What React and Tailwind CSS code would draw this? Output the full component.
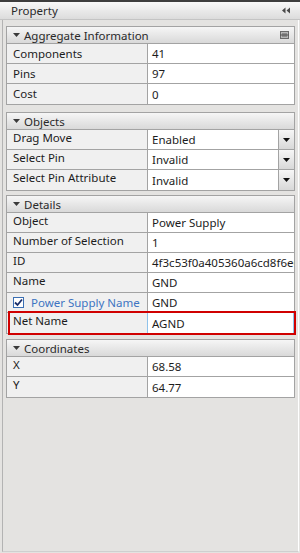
import React from 'react'

const font = { fontFamily: '"Noto Sans", "Open Sans", sans-serif' }

function Caret() {
  return (
    <svg width="7" height="4" viewBox="0 0 7 4" className="shrink-0">
      <path d="M0 0 L7 0 L3.5 4 Z" fill="#3a3a3a" />
    </svg>
  )
}

function PinIcon() {
  return (
    <svg width="9" height="8" viewBox="0 0 9 8">
      <rect x="0.5" y="0.5" width="8" height="7" fill="#b8b8b8" stroke="#6a6a6a" />
      <rect x="2" y="2" width="5" height="4" fill="#8c8c8c" />
      <line x1="0" y1="4" x2="9" y2="4" stroke="#555" />
    </svg>
  )
}

function SectionHeader({ title, pin }) {
  return (
    <div className="h-[17px] flex items-center pl-[6px] pr-[5px] border-b border-[#a3a3a3] bg-gradient-to-b from-[#f6f6f6] to-[#d9d9d9]">
      <Caret />
      <span className="ml-[4px] text-[11.5px] text-[#2a2a2a] leading-[15px]">{title}</span>
      <div className="flex-1" />
      {pin && <PinIcon />}
    </div>
  )
}

function Row({ label, value, last, drop, top, labelNode, highlight }) {
  return (
    <div className={`relative h-[20px] flex ${last ? '' : 'border-b border-[#a3a3a3]'}`}>
      <div
        className={`w-[141px] shrink-0 bg-[#f0f0f0] border-r ${
          highlight ? 'border-[#8fc2ea]' : 'border-[#a3a3a3]'
        } pl-[6px] flex ${top ? 'items-start' : 'items-center'} text-[11.5px] text-[#1c1c1c] leading-[16px]`}
      >
        {labelNode || label}
      </div>
      <div
        className={`flex-1 min-w-0 bg-white flex items-center overflow-hidden ${
          highlight ? 'border-r border-[#8fc2ea]' : ''
        }`}
      >
        <span className="pl-[4px] text-[11.5px] text-[#1c1c1c] leading-[17px] whitespace-nowrap flex-1 overflow-hidden">
          {value}
        </span>
        {drop && (
          <div className="w-[16px] h-full shrink-0 border-l border-[#a3a3a3] bg-gradient-to-b from-[#f7f7f7] to-[#d8d8d8] flex items-center justify-center">
            <svg width="7" height="4" viewBox="0 0 7 4">
              <path d="M0 0 L7 0 L3.5 4 Z" fill="#111" />
            </svg>
          </div>
        )}
      </div>
      {highlight && (
        <div className="absolute left-[1px] right-[-2px] top-[-2px] bottom-[-2px] border-2 border-[#d00000] pointer-events-none" />
      )}
    </div>
  )
}

function Section({ title, pin, children, className }) {
  return (
    <div className={`border border-[#a3a3a3] bg-white ${className}`}>
      <SectionHeader title={title} pin={pin} />
      {children}
    </div>
  )
}

export default function App() {
  return (
    <div className="w-[300px] h-[553px] bg-[#e4e3e1] flex flex-col overflow-hidden" style={font}>
      <div className="h-[2px] bg-[#3d3d3d]" />
      <div className="h-[18px] flex items-center pl-[11px] pr-[10px] bg-gradient-to-b from-[#f8f8f8] to-[#dcdcdc] border-b border-[#c4c4c4]">
        <span className="text-[11.5px] text-[#2a2a2a] leading-[15px]">Property</span>
        <div className="flex-1" />
        <svg width="8" height="7" viewBox="0 0 8 7">
          <path d="M0 3.5 L3.5 0.5 L3.5 6.5 Z M4.5 3.5 L8 0.5 L8 6.5 Z" fill="#4a4a4a" />
        </svg>
      </div>
      <div className="flex-1 ml-[2px] mr-[1px] mb-[1px] border-l border-[#b3b3b3] border-r border-r-white border-b border-b-[#cfcfcf] pl-[3px] pr-[3px] pt-[6px] flex flex-col">
        <Section title="Aggregate Information" pin>
          <Row label="Components" value="41" />
          <Row label="Pins" value="97" />
          <Row label="Cost" value="0" last />
        </Section>

        <Section title="Objects" className="mt-[7px]">
          <Row label="Drag Move" value="Enabled" drop top />
          <Row label="Select Pin" value="Invalid" drop top />
          <Row label="Select Pin Attribute" value="Invalid" drop top last />
        </Section>

        <Section title="Details" className="mt-[4px]">
          <Row label="Object" value="Power Supply" top />
          <Row label="Number of Selection" value="1" top />
          <Row label="ID" value="4f3c53f0a405360a6cd8f6e6b1" top />
          <Row label="Name" value="GND" top />
          <Row
            value="GND"
            top
            labelNode={
              <div className="flex items-center pt-[2px]">
                <div className="w-[11px] h-[11px] border border-[#3b6fb3] bg-white flex items-center justify-center">
                  <svg width="9" height="9" viewBox="0 0 9 9">
                    <path d="M1 4.5 L3.5 7 L8 1.5" fill="none" stroke="#1b2f6b" strokeWidth="1.8" />
                  </svg>
                </div>
                <span className="ml-[7px] text-[#3d74c2] leading-[15px]">Power Supply Name</span>
              </div>
            }
          />
          <Row label="Net Name" value="AGND" top last highlight />
        </Section>

        <Section title="Coordinates" className="mt-[5px]">
          <Row label="X" value="68.58" top />
          <Row label="Y" value="64.77" top last />
        </Section>
      </div>
    </div>
  )
}
